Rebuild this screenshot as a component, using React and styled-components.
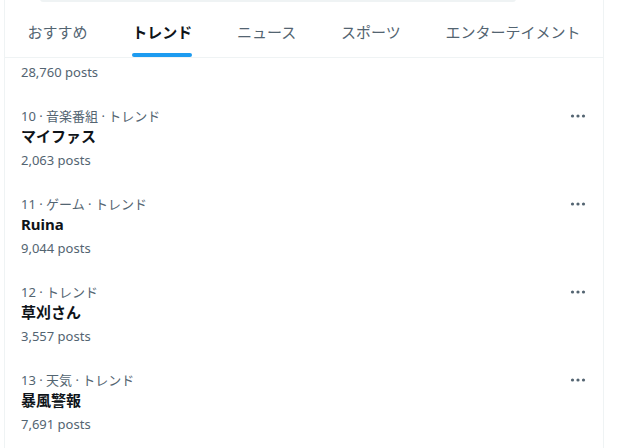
import React from "react";
import styled, { createGlobalStyle } from "styled-components";

const Global = createGlobalStyle`
  html, body { margin: 0; padding: 0; background: #ffffff; }
  body {
    font-family: "Noto Sans", "Noto Sans CJK JP", sans-serif;
    -webkit-font-smoothing: antialiased;
  }
`;

const Page = styled.div`
  width: 620px;
  height: 448px;
  overflow: hidden;
  background: #fff;
`;

const Column = styled.main`
  position: relative;
  margin-left: 4px;
  width: 600px;
  height: 448px;
  box-sizing: border-box;
  border-left: 1px solid #eff3f4;
  border-right: 1px solid #eff3f4;
  overflow: hidden;
`;

const SearchEdge = styled.div`
  position: absolute;
  top: -4px;
  left: 35px;
  width: 476px;
  height: 6px;
  border-radius: 9999px;
  background: #eff3f4;
`;

const TabBar = styled.nav`
  display: flex;
  height: 58px;
  box-sizing: border-box;
  border-bottom: 1px solid #eff3f4;
`;

const Tab = styled.div`
  flex: 1 1 auto;
  display: flex;
  justify-content: center;
  padding: 0 16px;
`;

const TabInner = styled.div`
  display: inline-flex;
  flex-direction: column;
  padding-top: 22px;
`;

const TabLabel = styled.span`
  font-size: 15px;
  line-height: 20px;
  white-space: nowrap;
  font-weight: ${(p) => (p.$active ? 700 : 400)};
  color: ${(p) => (p.$active ? "#0f1419" : "#536471")};
`;

const Indicator = styled.div`
  margin-top: 11px;
  height: 4px;
  border-radius: 9999px;
  background: ${(p) => (p.$active ? "#1d9bf0" : "transparent")};
`;

const PartialRow = styled.div`
  padding: 4px 16px 12px;
`;

const Row = styled.div`
  padding: 12px 16px;
  display: flex;
  flex-direction: column;
`;

const MetaLine = styled.div`
  display: flex;
  align-items: center;
  justify-content: space-between;
  height: 20px;
`;

const Meta = styled.span`
  font-size: 13px;
  line-height: 20px;
  color: #536471;
  white-space: nowrap;
`;

const Title = styled.div`
  font-size: 15px;
  line-height: 20px;
  font-weight: 700;
  color: #0f1419;
`;

const Posts = styled.div`
  margin-top: ${(p) => (p.$flush ? "0" : "4px")};
  font-size: 13px;
  line-height: 20px;
  color: #536471;
`;

const MoreIcon = styled.svg`
  width: 17px;
  height: 20px;
  flex: none;
`;

const More = () => (
  <MoreIcon viewBox="0 0 17 20">
    <circle cx="2.5" cy="10" r="1.6" fill="#536471" />
    <circle cx="8" cy="10" r="1.6" fill="#536471" />
    <circle cx="13.5" cy="10" r="1.6" fill="#536471" />
  </MoreIcon>
);

const tabs = [
  { label: "おすすめ" },
  { label: "トレンド", active: true },
  { label: "ニュース" },
  { label: "スポーツ" },
  { label: "エンターテイメント" },
];

const trends = [
  { meta: "10 · 音楽番組 · トレンド", title: "マイファス", posts: "2,063 posts" },
  { meta: "11 · ゲーム · トレンド", title: "Ruina", posts: "9,044 posts" },
  { meta: "12 · トレンド", title: "草刈さん", posts: "3,557 posts" },
  { meta: "13 · 天気 · トレンド", title: "暴風警報", posts: "7,691 posts" },
];

export default function App() {
  return (
    <Page>
      <Global />
      <Column>
        <SearchEdge />
        <TabBar>
          {tabs.map((t) => (
            <Tab key={t.label}>
              <TabInner>
                <TabLabel $active={t.active}>{t.label}</TabLabel>
                <Indicator $active={t.active} />
              </TabInner>
            </Tab>
          ))}
        </TabBar>
        <PartialRow>
          <Posts $flush>28,760 posts</Posts>
        </PartialRow>
        {trends.map((t) => (
          <Row key={t.meta}>
            <MetaLine>
              <Meta>{t.meta}</Meta>
              <More />
            </MetaLine>
            <Title>{t.title}</Title>
            <Posts>{t.posts}</Posts>
          </Row>
        ))}
      </Column>
    </Page>
  );
}
